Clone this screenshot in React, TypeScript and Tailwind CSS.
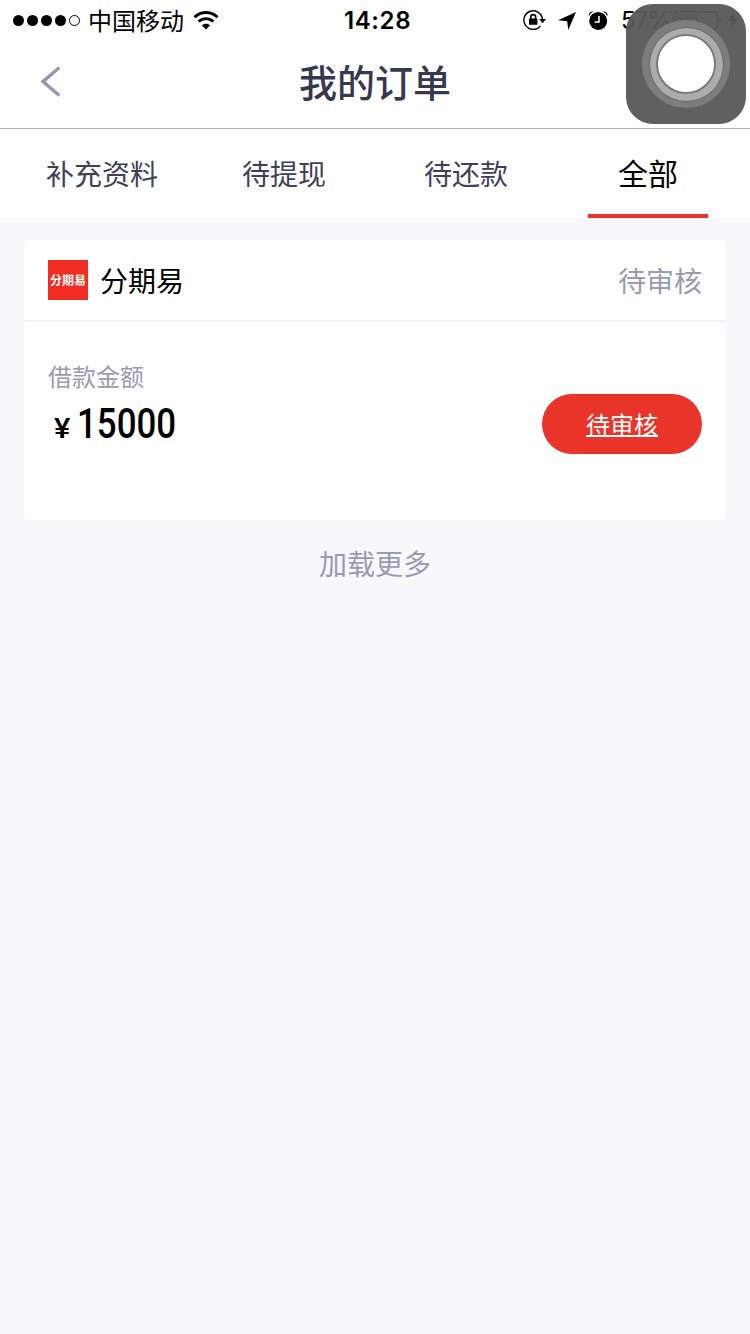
import React, { useState } from 'react';

// ===== SAMPLE DATA =====
const tabs = [
  { id: 'info', label: '补充资料' },
  { id: 'withdraw', label: '待提现' },
  { id: 'repay', label: '待还款' },
  { id: 'all', label: '全部' },
];

const orders = [
  { id: 1, name: '分期易', status: '待审核', amountLabel: '借款金额', amount: 15000, action: '待审核' },
];

const StatusBar: React.FC = () => (
  <div className="flex h-10 items-center text-black">
    {/* Signal, carrier and wifi */}
    <div className="flex w-[344px] items-center pl-[13px]">
      <svg className="h-3 w-[68px] shrink-0" viewBox="0 0 68 12">
        <circle cx="5.5" cy="6.5" r="5.5" />
        <circle cx="19.5" cy="6.5" r="5.5" />
        <circle cx="33.5" cy="6.5" r="5.5" />
        <circle cx="47.5" cy="6.5" r="5.5" />
        <circle cx="61.5" cy="6.5" r="5" fill="none" stroke="black" />
      </svg>
      <span className="ml-[7px] text-2xl leading-10">中国移动</span>
      <svg className="ml-[9px] h-[19px] w-[26px]" viewBox="0 0 26 19">
        <path d="M1.5 6.3C8 -0.2 18 -0.2 24.5 6.3" fill="none" stroke="black" strokeWidth="2.9" />
        <path d="M5.6 10.6C10 6.5 16 6.5 20.4 10.6" fill="none" stroke="black" strokeWidth="2.8" />
        <path d="M13 18.5L8.8 14.3C11.3 12.1 14.7 12.1 17.2 14.3Z" />
      </svg>
    </div>

    <span className="w-[67px] pt-0.5 font-[Inter,sans-serif] text-2xl font-semibold leading-10 tracking-[0.6px]">14:28</span>

    {/* Indicators */}
    <div className="flex flex-1 items-center pl-[112px]">
      <svg className="h-5 w-6" viewBox="0 0 24 20">
        <path d="M17.4 16A9.3 9.3 0 1 1 19.4 9" fill="none" stroke="black" strokeWidth="1.4" />
        <path d="M16.2 9h6.8l-3.4 4.2z" />
        <rect x="6" y="8.4" width="8.4" height="6.4" rx="0.6" />
        <path d="M7.8 9V7a2.4 2.4 0 0 1 4.8 0v2" fill="none" stroke="black" strokeWidth="1.6" />
      </svg>
      <svg className="ml-[11px] mt-0.5 h-[18px] w-[18px]" viewBox="0 0 18 18">
        <path d="M18 0L10.3 18L9.2 9.2L0 8.2Z" />
      </svg>
      <svg className="ml-3 h-[19px] w-5" viewBox="0 0 20 19">
        <circle cx="10.2" cy="9.9" r="9" />
        <path d="M2.6 3.6L5.6 1.4M14.8 1.4L17.8 3.6" stroke="white" strokeWidth="1" />
        <path d="M0.6 4.4Q1.2 0.8 5 0.3L4.6 1.3Q2.2 2.2 1.6 4.6ZM19.8 4.4Q19.2 0.8 15.4 0.3L15.8 1.3Q18.2 2.2 18.8 4.6Z" />
        <path d="M11 5v6H6.6" fill="none" stroke="white" strokeWidth="1.5" />
      </svg>
      <span className="ml-[13px] w-[47px] pt-0.5 font-[Inter,sans-serif] text-2xl leading-10 tracking-[-0.8px]">57%</span>
      <svg className="ml-[5px] h-5 w-[68px]" viewBox="0 0 68 20">
        <rect x="0.8" y="1.8" width="43.4" height="17" rx="3" fill="none" stroke="black" strokeWidth="1.3" />
        <rect x="2.5" y="3.5" width="23" height="13.6" rx="1" fill="#4cd964" />
        <path d="M46 7.5c2.6 0.8 2.6 5 0 5.8z" />
        <path d="M61.5 2L55 11h4.3L57 19l8-10.5h-4.3z" />
      </svg>
    </div>
  </div>
);

// Floating system button, sits on top of the status bar
const AssistiveTouch: React.FC = () => (
  <div className="absolute right-1 top-1 flex size-[120px] items-center justify-center rounded-[27px] bg-[#575757]/95">
    <div className="flex size-[88px] items-center justify-center rounded-full bg-[#7d7d7d]">
      <div className="flex size-[75px] items-center justify-center rounded-full border border-[#666666] bg-[#acacac]">
        <div className="size-[60px] rounded-full border-2 border-[#7b7b7b] bg-white" />
      </div>
    </div>
  </div>
);

const App: React.FC = () => {
  const [active, setActive] = useState('all');

  return (
    <div className="relative min-h-[1334px] w-[750px] overflow-hidden bg-[#f7f8fa] font-['Noto_Sans_CJK_SC',sans-serif]">
      {/* Header */}
      <header className="h-[129px] border-b border-[#b2b2b2] bg-white">
        <StatusBar />
        <div className="flex h-[88px] items-center px-10">
          <button className="w-10" aria-label="返回">
            <svg className="-mt-1.5 h-[31px] w-[21px]" viewBox="0 0 21 31">
              <path d="M19.3 1.5L3 15.6L19.3 29.5" fill="none" stroke="#9696b0" strokeWidth="3.4" />
            </svg>
          </button>
          <h1 className="flex-1 pb-[7px] text-center text-[38px] font-medium leading-none text-[#36384e]">我的订单</h1>
          <div className="w-10" />
        </div>
      </header>

      {/* Tabs */}
      <nav className="flex h-[89px] bg-white px-[11px]">
        {tabs.map(tab => (
          <button
            key={tab.id}
            onClick={() => setActive(tab.id)}
            className="flex flex-1 flex-col items-center"
          >
            <span
              className={`flex h-[85px] items-center pt-0.5 ${
                active === tab.id ? 'text-[30px] text-black' : 'text-[28px] text-[#3f4057]'
              }`}
            >
              {tab.label}
            </span>
            <span className={`h-1 w-[120px] ${active === tab.id ? 'bg-[#ea3429]' : 'bg-white'}`} />
          </button>
        ))}
      </nav>

      {/* Orders */}
      <main className="px-6 pt-[22px]">
        {orders.map(order => (
          <section key={order.id} className="h-[280px] rounded-md bg-white">
            <div className="flex h-[82px] items-center border-b-2 border-[#f0f0f6] px-6">
              <div className="relative flex size-10 items-center justify-center bg-[#f22c20] pb-px text-[12px] font-bold leading-none text-white">
                {order.name}
                <span className="absolute right-[6px] top-[15px] size-[3px] rounded-full bg-[#f5a000]" />
              </div>
              <span className="ml-3 flex-1 pb-px text-[28px] leading-10 text-black">{order.name}</span>
              <span className="pb-px text-[28px] leading-10 text-[#9a9ab2]">{order.status}</span>
            </div>

            <div className="flex items-start justify-between px-6 pt-[35px]">
              <div>
                <p className="text-2xl leading-[38px] text-[#9a9ab2]">{order.amountLabel}</p>
                <p className="flex items-baseline pl-[6px] pt-0.5 text-black">
                  <span className="w-[23px] origin-left scale-x-110 font-[Roboto,sans-serif] text-[28px] font-medium leading-[54px]">¥</span>
                  <span className="origin-left scale-x-[0.83] font-[Roboto,sans-serif] text-[42px] font-medium leading-[54px]">
                    {order.amount}
                  </span>
                </p>
              </div>
              <button className="mt-[37px] h-[60px] w-40 rounded-full bg-[#e93529] text-2xl text-white underline decoration-2 underline-offset-1">
                {order.action}
              </button>
            </div>
          </section>
        ))}

        <p className="pt-[23px] text-center text-[28px] leading-10 text-[#9a9ab2]">加载更多</p>
      </main>

      <AssistiveTouch />
    </div>
  );
};

export default App;
